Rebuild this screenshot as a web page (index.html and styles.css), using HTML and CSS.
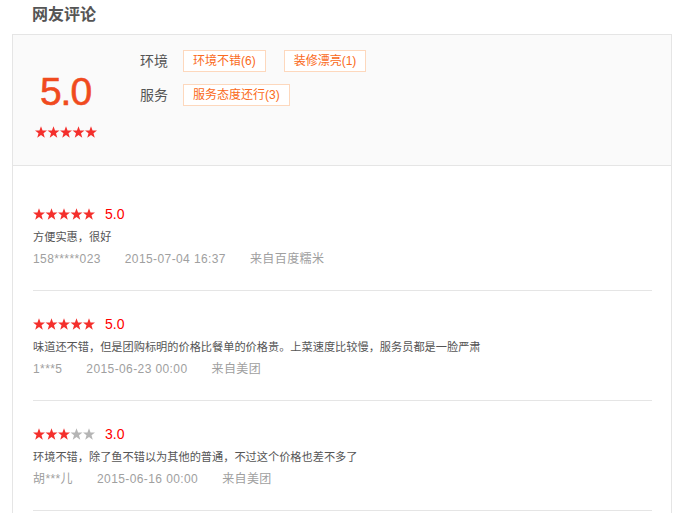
FILE: index.html
```html
<!DOCTYPE html>
<html lang="zh-CN">
<head>
<meta charset="utf-8">
<title>网友评论</title>
<link rel="stylesheet" href="styles.css">
</head>
<body>
<svg class="defs" width="0" height="0" aria-hidden="true">
  <defs>
    <polygon id="star" points="6,0.2 7.55,4.45 12,4.55 8.5,7.3 9.75,11.7 6,9.1 2.25,11.7 3.5,7.3 0,4.55 4.45,4.45"/>
  </defs>
</svg>
<div class="page">
  <h2 class="title">网友评论</h2>
  <div class="box">
    <div class="summary">
      <div class="score-col">
        <div class="big-score">5.0</div>
        <svg class="stars" width="62" height="12" viewBox="0 0 62 12">
          <use href="#star" x="0" class="on"/><use href="#star" x="12.5" class="on"/><use href="#star" x="25" class="on"/><use href="#star" x="37.5" class="on"/><use href="#star" x="50" class="on"/>
        </svg>
      </div>
      <div class="tags-col">
        <div class="tag-row">
          <span class="tag-label">环境</span>
          <span class="tag">环境不错(6)</span>
          <span class="tag">装修漂亮(1)</span>
        </div>
        <div class="tag-row">
          <span class="tag-label">服务</span>
          <span class="tag">服务态度还行(3)</span>
        </div>
      </div>
    </div>
    <ul class="reviews">
      <li class="review">
        <div class="rating">
          <svg class="stars" width="62" height="12" viewBox="0 0 62 12">
            <use href="#star" x="0" class="on"/><use href="#star" x="12.5" class="on"/><use href="#star" x="25" class="on"/><use href="#star" x="37.5" class="on"/><use href="#star" x="50" class="on"/>
          </svg>
          <span class="rate-num">5.0</span>
        </div>
        <p class="comment">方便实惠，很好</p>
        <div class="meta"><span>158*****023</span><span>2015-07-04 16:37</span><span>来自百度糯米</span></div>
      </li>
      <li class="review">
        <div class="rating">
          <svg class="stars" width="62" height="12" viewBox="0 0 62 12">
            <use href="#star" x="0" class="on"/><use href="#star" x="12.5" class="on"/><use href="#star" x="25" class="on"/><use href="#star" x="37.5" class="on"/><use href="#star" x="50" class="on"/>
          </svg>
          <span class="rate-num">5.0</span>
        </div>
        <p class="comment">味道还不错，但是团购标明的价格比餐单的价格贵。上菜速度比较慢，服务员都是一脸严肃</p>
        <div class="meta"><span>1***5</span><span>2015-06-23 00:00</span><span>来自美团</span></div>
      </li>
      <li class="review">
        <div class="rating">
          <svg class="stars" width="62" height="12" viewBox="0 0 62 12">
            <use href="#star" x="0" class="on"/><use href="#star" x="12.5" class="on"/><use href="#star" x="25" class="on"/><use href="#star" x="37.5" class="off"/><use href="#star" x="50" class="off"/>
          </svg>
          <span class="rate-num">3.0</span>
        </div>
        <p class="comment">环境不错，除了鱼不错以为其他的普通，不过这个价格也差不多了</p>
        <div class="meta"><span>胡***儿</span><span>2015-06-16 00:00</span><span>来自美团</span></div>
      </li>
    </ul>
  </div>
</div>
</body>
</html>
```

FILE: styles.css
```css
* { box-sizing: border-box; }
html, body { margin: 0; padding: 0; background: #fff; }
body {
  font-family: "Liberation Sans", "Noto Sans CJK SC", sans-serif;
  color: #555;
  font-size: 12px;
}
.defs { position: absolute; width: 0; height: 0; }
.page { padding-left: 12px; width: 672px; }
.title {
  margin: 0;
  height: 34px;
  padding: 0 0 0 20px;
  font-size: 16px;
  line-height: 30px;
  font-weight: bold;
  color: #555;
}
.box {
  border: 1px solid #e5e5e5;
  width: 660px;
}
.summary {
  display: flex;
  height: 131px;
  padding: 15px 0 0 21px;
  background: #fafafa;
  border-bottom: 1px solid #e5e5e5;
}
.score-col {
  width: 63px;
  display: flex;
  flex-direction: column;
  align-items: center;
}
.big-score {
  margin-top: 22px;
  font-size: 39px;
  line-height: 40px;
  letter-spacing: -1px;
  color: #f04a1e;
  -webkit-text-stroke: 0.6px #f04a1e;
}
.score-col .stars { margin-top: 14px; }
.stars { display: block; }
.stars .on { fill: #f42f2c; }
.stars .off { fill: #b5b5b5; }
.tags-col {
  margin-left: 43px;
  display: flex;
  flex-direction: column;
  gap: 12px;
}
.tag-row {
  display: flex;
  align-items: center;
  height: 22px;
}
.tag-label {
  flex: 0 0 43px;
  white-space: nowrap;
  font-size: 14px;
  color: #555;
  line-height: 22px;
}
.tag {
  display: inline-block;
  height: 22px;
  line-height: 20px;
  padding: 0 9px;
  border: 1px solid #fdd8bd;
  background: #fff;
  color: #fa6a20;
  font-size: 12px;
  white-space: nowrap;
}
.tag + .tag { margin-left: 18px; }
.reviews {
  list-style: none;
  margin: 0;
  padding: 15px 19px 20px 20px;
}
.review {
  padding: 23px 0 20px;
  border-bottom: 1px solid #e5e5e5;
}
.rating {
  display: flex;
  align-items: center;
  height: 20px;
}
.rate-num {
  margin-left: 10px;
  font-size: 14px;
  color: #f00;
  line-height: 20px;
}
.comment {
  margin: 2px 0 0;
  line-height: 22px;
  font-size: 11.2px;
  color: #555;
}
.meta {
  display: flex;
  gap: 24px;
  line-height: 22px;
  font-size: 12px;
  letter-spacing: 0.4px;
  color: #a0a0a0;
}
```
